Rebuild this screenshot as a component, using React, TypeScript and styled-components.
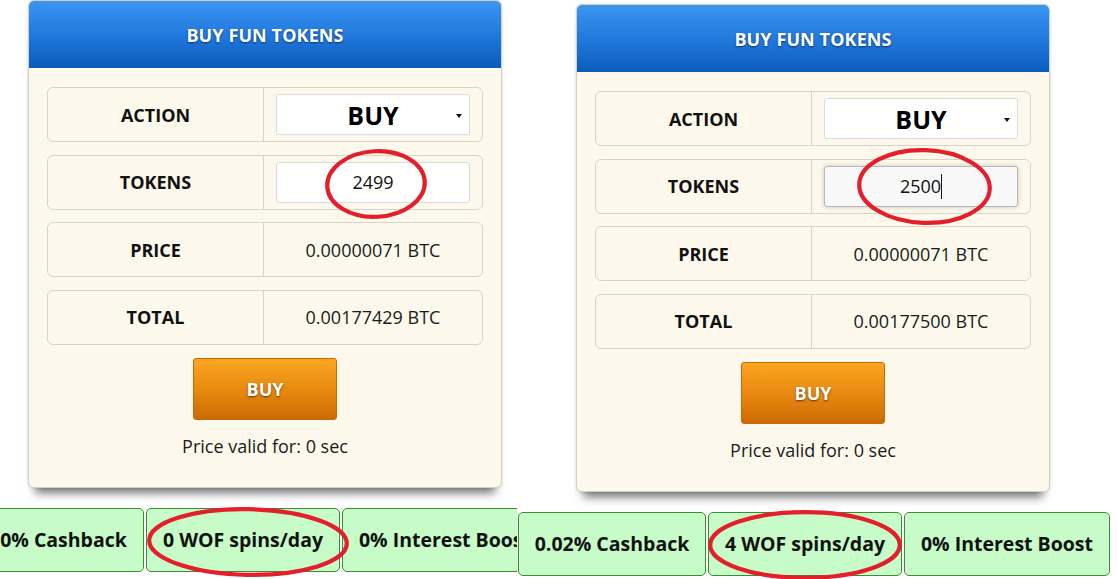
import React from "react";
import styled, { createGlobalStyle } from "styled-components";

const Global = createGlobalStyle`
  html, body { margin: 0; padding: 0; background: #ffffff; }
  body { font-family: "Open Sans", "Noto Sans", sans-serif; color: #111; }
`;

const Page = styled.div`
  display: flex;
  width: 1117px;
  height: 579px;
  overflow: hidden;
  background: #fff;
`;

const Shot = styled.div<{ $w: number; $top: number }>`
  position: relative;
  flex: none;
  width: ${(p) => p.$w}px;
  height: 579px;
  overflow: hidden;
  padding-top: ${(p) => p.$top}px;
  box-sizing: border-box;
  background: #fff;
`;

const Card = styled.div<{ $left: number }>`
  width: 474px;
  margin-left: ${(p) => p.$left}px;
  box-sizing: border-box;
  border: 1px solid #d3d1c6;
  border-radius: 6px;
  background: #fcf9ec;
  box-shadow: 0 0 3px rgba(0, 0, 0, 0.12), 0 12px 9px -7px rgba(0, 0, 0, 0.55);
`;

const Header = styled.div`
  height: 67px;
  display: flex;
  align-items: center;
  justify-content: center;
  border-radius: 5px 5px 0 0;
  background: linear-gradient(to bottom, #3b95f1 0%, #1f77db 55%, #0a5cb9 100%);
  color: #fff;
  font-weight: 700;
  font-size: 18px;
  text-shadow: 0 1px 2px rgba(0, 0, 0, 0.55);
  letter-spacing: 0.1px;
`;

const Body = styled.div`
  display: flex;
  flex-direction: column;
  align-items: center;
  padding: 19px 18px 29px;
`;

const Rows = styled.div`
  align-self: stretch;
  display: flex;
  flex-direction: column;
  gap: 12.67px;
`;

const Row = styled.div`
  display: grid;
  grid-template-columns: 216px 1fr;
  height: 55px;
  box-sizing: border-box;
  border: 1px solid #d8d5c8;
  border-radius: 6px;
`;

const Label = styled.div`
  display: flex;
  align-items: center;
  justify-content: center;
  border-right: 1px solid #d8d5c8;
  font-weight: 700;
  font-size: 18px;
  color: #111;
`;

const Value = styled.div`
  display: flex;
  align-items: center;
  justify-content: center;
  padding: 0 12px;
  font-size: 18px;
  color: #1a1a1a;
`;

const Select = styled.div`
  width: 100%;
  height: 41px;
  box-sizing: border-box;
  display: grid;
  grid-template-columns: 1fr auto 1fr;
  align-items: center;
  background: #fff;
  border: 1px solid #dcdcdc;
  border-radius: 2px;
  padding: 0 7px;
  font-weight: 700;
  font-size: 25px;
  color: #000;
`;

const Arrow = styled.span`
  justify-self: end;
  width: 0;
  height: 0;
  border-left: 3.5px solid transparent;
  border-right: 3.5px solid transparent;
  border-top: 4px solid #111;
  margin-top: 2px;
`;

const Field = styled.div<{ $focus?: boolean }>`
  width: 100%;
  height: 41px;
  box-sizing: border-box;
  display: flex;
  align-items: center;
  justify-content: center;
  background: ${(p) => (p.$focus ? "#f8f8f8" : "#fff")};
  border: 1px solid ${(p) => (p.$focus ? "#b9b9b9" : "#dadada")};
  border-radius: 3px;
  box-shadow: ${(p) => (p.$focus ? "0 0 4px rgba(0,0,0,0.22)" : "none")};
  font-size: 18px;
  color: #111;
`;

const Caret = styled.span`
  display: inline-block;
  width: 1px;
  height: 25px;
  background: #111;
  margin-left: 0px;
`;

const BuyButton = styled.div`
  margin-top: 13px;
  width: 144px;
  height: 62px;
  box-sizing: border-box;
  display: flex;
  align-items: center;
  justify-content: center;
  border: 1px solid #c46a08;
  border-radius: 3px;
  background: linear-gradient(to bottom, #fba622 0%, #e98a10 50%, #cc6a02 100%);
  color: #fff;
  font-weight: 700;
  font-size: 18px;
  text-shadow: 0 1px 2px rgba(0, 0, 0, 0.6);
`;

const Note = styled.div`
  margin-top: 14px;
  line-height: 24px;
  font-size: 18px;
  color: #1a1a1a;
`;

const Badges = styled.div<{ $left: number }>`
  display: flex;
  gap: 2px;
  margin-top: 20px;
  margin-left: ${(p) => p.$left}px;
`;

const Badge = styled.div<{ $w: number }>`
  flex: none;
  width: ${(p) => p.$w}px;
  height: 64px;
  box-sizing: border-box;
  display: flex;
  align-items: center;
  justify-content: center;
  white-space: nowrap;
  overflow: hidden;
  background: #c7fbc7;
  border: 1px solid #3a8d32;
  border-radius: 5px;
  font-weight: 700;
  font-size: 19.5px;
  color: #111;
`;

const Mark = styled.svg<{ $x: number; $y: number }>`
  position: absolute;
  left: ${(p) => p.$x}px;
  top: ${(p) => p.$y}px;
  overflow: visible;
  pointer-events: none;
`;

function Ellipse({ x, y, w, h, tilt = 0 }: { x: number; y: number; w: number; h: number; tilt?: number }) {
  return (
    <Mark $x={x} $y={y} width={w} height={h} viewBox={`0 0 ${w} ${h}`}>
      <ellipse
        cx={w / 2}
        cy={h / 2}
        rx={w / 2 - 2.2}
        ry={h / 2 - 2.2}
        fill="none"
        stroke="#e21f2b"
        strokeWidth={4.2}
        transform={`rotate(${tilt} ${w / 2} ${h / 2})`}
      />
    </Mark>
  );
}

type ShotData = {
  width: number;
  top: number;
  cardLeft: number;
  tokens: string;
  focus: boolean;
  total: string;
  badgeLeft: number;
  badges: { text: string; w: number }[];
  marks: { x: number; y: number; w: number; h: number; tilt?: number }[];
};

const shots: ShotData[] = [
  {
    width: 517,
    top: 0,
    cardLeft: 28,
    tokens: "2499",
    focus: false,
    total: "0.00177429 BTC",
    badgeLeft: -17,
    badges: [
      { text: "0% Cashback", w: 161 },
      { text: "0 WOF spins/day", w: 194 },
      { text: "0% Interest Boost", w: 206 },
    ],
    marks: [
      { x: 325, y: 149, w: 102, h: 70, tilt: -3 },
      { x: 147, y: 507, w: 202, h: 70, tilt: 1 },
    ],
  },
  {
    width: 600,
    top: 4,
    cardLeft: 59,
    tokens: "2500",
    focus: true,
    total: "0.00177500 BTC",
    badgeLeft: 1,
    badges: [
      { text: "0.02% Cashback", w: 188 },
      { text: "4 WOF spins/day", w: 194 },
      { text: "0% Interest Boost", w: 206 },
    ],
    marks: [
      { x: 340, y: 148, w: 135, h: 77, tilt: 2 },
      { x: 191, y: 510, w: 194, h: 70, tilt: 0 },
    ],
  },
];

function Panel({ d }: { d: ShotData }) {
  return (
    <Shot $w={d.width} $top={d.top}>
      <Card $left={d.cardLeft}>
        <Header>BUY FUN TOKENS</Header>
        <Body>
          <Rows>
            <Row>
              <Label>ACTION</Label>
              <Value>
                <Select>
                  <span />
                  <span>BUY</span>
                  <Arrow />
                </Select>
              </Value>
            </Row>
            <Row>
              <Label>TOKENS</Label>
              <Value>
                <Field $focus={d.focus}>
                  <span>{d.tokens}</span>
                  {d.focus && <Caret />}
                </Field>
              </Value>
            </Row>
            <Row>
              <Label>PRICE</Label>
              <Value>0.00000071 BTC</Value>
            </Row>
            <Row>
              <Label>TOTAL</Label>
              <Value>{d.total}</Value>
            </Row>
          </Rows>
          <BuyButton>BUY</BuyButton>
          <Note>Price valid for: 0 sec</Note>
        </Body>
      </Card>
      <Badges $left={d.badgeLeft}>
        {d.badges.map((b) => (
          <Badge key={b.text} $w={b.w}>
            {b.text}
          </Badge>
        ))}
      </Badges>
      {d.marks.map((m, i) => (
        <Ellipse key={i} {...m} />
      ))}
    </Shot>
  );
}

export default function App() {
  return (
    <>
      <Global />
      <Page>
        {shots.map((d, i) => (
          <Panel key={i} d={d} />
        ))}
      </Page>
    </>
  );
}
